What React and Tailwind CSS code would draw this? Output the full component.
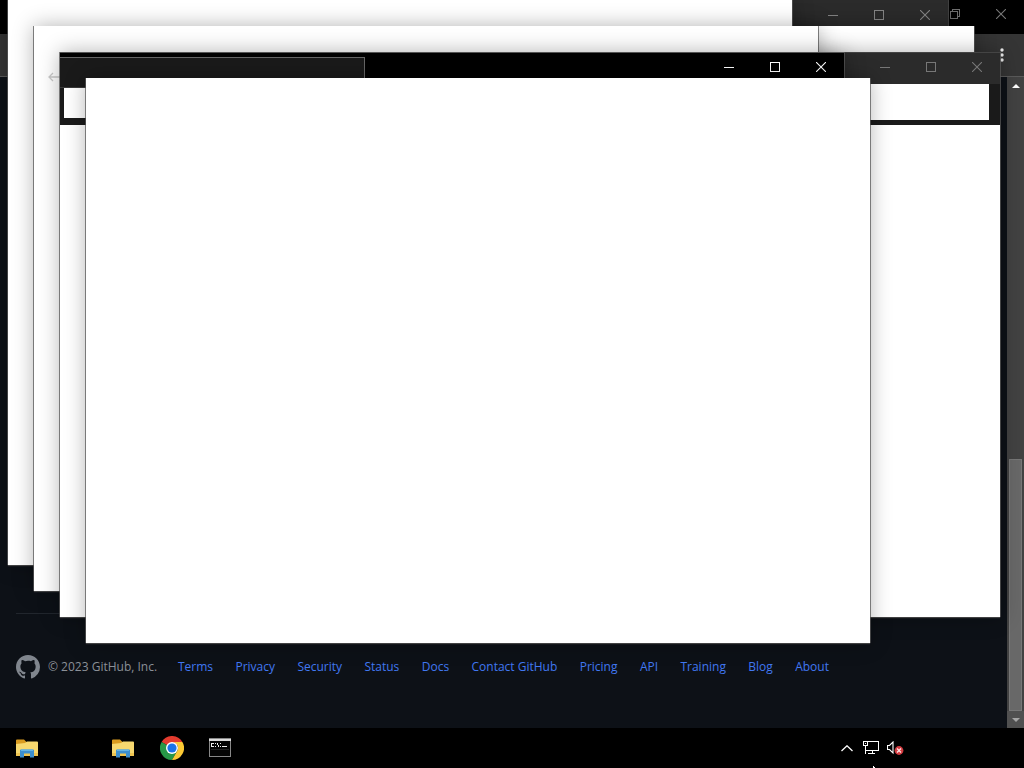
import React from "react";

const footerLinks = [
  "Terms", "Privacy", "Security", "Status", "Docs", "Contact GitHub",
  "Pricing", "API", "Training", "Blog", "About",
];

function MinimizeIcon() {
  return (
    <svg width="10" height="10" viewBox="0 0 10 10" fill="none" stroke="currentColor" shapeRendering="crispEdges">
      <path d="M0 5.5H10" />
    </svg>
  );
}

function MaximizeIcon() {
  return (
    <svg width="10" height="10" viewBox="0 0 10 10" fill="none" stroke="currentColor" shapeRendering="crispEdges">
      <path d="M.5 .5H9.5V9.5H.5Z" />
    </svg>
  );
}

function RestoreIcon() {
  return (
    <svg width="10" height="10" viewBox="0 0 10 10" fill="none" stroke="currentColor" shapeRendering="crispEdges">
      <path d="M.5 2.5H7.5V9.5H.5ZM2.5 2.5V.5H9.5V7.5H7.5" />
    </svg>
  );
}

function CloseIcon() {
  return (
    <svg width="10" height="10" viewBox="0 0 10 10" fill="none" stroke="currentColor" strokeWidth="1.1">
      <path d="M0 0L10 10M10 0L0 10" />
    </svg>
  );
}

function WindowControls({ restored = true }) {
  const button = "flex h-full w-[46px] items-center justify-center";
  return (
    <div className="ml-auto flex h-full">
      <button aria-label="Minimize" className={button}><MinimizeIcon /></button>
      <button aria-label={restored ? "Maximize" : "Restore"} className={button}>
        {restored ? <MaximizeIcon /> : <RestoreIcon />}
      </button>
      <button aria-label="Close" className={button}><CloseIcon /></button>
    </div>
  );
}

function Window({ className, children }) {
  return (
    <section className={`absolute flex h-[565px] w-[784px] flex-col shadow-[0_1px_1px_rgba(80,80,80,0.8),-1px_0_0_rgba(90,90,90,0.7),1px_0_0_rgba(90,90,90,0.7),0_0_20px_rgba(0,0,0,0.3)] ${className}`}>
      {children}
    </section>
  );
}

function FolderIcon() {
  return (
    <svg width="22" height="19" viewBox="0 0 22 19">
      <path d="M0 1.5Q0 .5 1 .5H8L10.5 3H21V5H0Z" fill="#d99b20" />
      <path d="M0 5L9 4L11 2.5H21Q22 2.5 22 3.5V17H0Z" fill="#f7d86f" />
      <path d="M0 14H22V17H0Z" fill="#efc451" />
      <path d="M4 18.5V11.5Q4 10.5 5 10.5H17Q18 10.5 18 11.5V18.5H14V14.5H8V18.5Z" fill="#3d8fcf" />
      <path d="M5 10.5H17V12H5Z" fill="#64b4e6" />
    </svg>
  );
}

function ChromeIcon() {
  return (
    <svg width="24" height="24" viewBox="0 0 48 48">
      <path d="M24 24L3.2 12A24 24 0 0 1 44.8 12Z" fill="#e33b2e" />
      <path d="M3.2 12A24 24 0 0 0 24 48L34.4 30L24 24Z" fill="#279847" />
      <path d="M44.8 12A24 24 0 0 1 24 48L34.4 30A12 12 0 0 0 24 12Z" fill="#fcc934" />
      <circle cx="24" cy="24" r="12" fill="#fff" />
      <circle cx="24" cy="24" r="9.2" fill="#1a73e8" />
    </svg>
  );
}

function TerminalIcon() {
  return (
    <svg width="22" height="20" viewBox="0 0 22 20" shapeRendering="crispEdges">
      <rect x=".5" y=".5" width="21" height="18" fill="#050505" stroke="#888" />
      <path d="M0 1.5H22" stroke="#dcdcdc" strokeWidth="2" />
      <path d="M4.5 5.5H2.5V8.5H4.5M6.5 5V6M6.5 8V9M8 5L10 9M11.5 5V6M11.5 8V9M13 8.5H18" fill="none" stroke="#eee" />
      <path d="M2 11H20" stroke="#222" />
    </svg>
  );
}

function NetworkIcon() {
  return (
    <svg width="16" height="14" viewBox="0 0 16 14" fill="none" stroke="#fff" shapeRendering="crispEdges">
      <path d="M5 .5H15.5V9.5H3M.5 .5H4.5V4.5H.5ZM2.5 4V12.5M9.5 10V12.5M5 12.5H12M2 2.5H3" />
    </svg>
  );
}

function MutedIcon() {
  return (
    <svg width="17" height="14" viewBox="0 0 17 14" fill="none">
      <path d="M.5 4.5H2.5L6 1V12L2.5 8.5H.5Z" stroke="#fff" strokeWidth="1.1" />
      <circle cx="12" cy="9.5" r="4.4" fill="#d33b40" />
      <path d="M10 7.5L14 11.5M14 7.5L10 11.5" stroke="#ffe5e5" strokeWidth="1.3" />
    </svg>
  );
}

function Scrollbar() {
  return (
    <div className="flex w-[17px] shrink-0 flex-col bg-[#424242]">
      <button aria-label="Scroll up" className="flex h-[18px] items-center justify-center">
        <svg width="8" height="4" viewBox="0 0 8 4"><path d="M0 4L4 0L8 4Z" fill="#fff" /></svg>
      </button>
      <div className="flex flex-1 flex-col justify-end px-0.5">
        <div className="h-[252px] border border-[#777] bg-[#686868]" />
      </div>
      <button aria-label="Scroll down" className="flex h-[17px] items-center justify-center bg-[#505050]">
        <svg width="8" height="4" viewBox="0 0 8 4"><path d="M0 0L4 4L8 0Z" fill="#a5a5a5" /></svg>
      </button>
    </div>
  );
}

function Browser() {
  return (
    <div className="flex flex-1 flex-col bg-[#0d1117]">
      <header className="flex h-[34px] bg-black pb-[6px] text-[#777]">
        <WindowControls restored={false} />
      </header>
      <div className="flex h-[43px] items-center justify-end border-b border-[#5a5a5a] bg-[#353535] pr-5">
        <button aria-label="Browser menu">
          <svg width="4" height="14" viewBox="0 0 4 14" fill="#eee">
            <circle cx="2" cy="2" r="1.7" /><circle cx="2" cy="7" r="1.7" /><circle cx="2" cy="12" r="1.7" />
          </svg>
        </button>
      </div>
      <div className="flex flex-1">
        <main className="flex flex-1 flex-col justify-end px-4 pb-[49px]">
          <footer className="flex items-center border-t border-[#21262d] pt-[41px]">
            <a href="#home" aria-label="GitHub" className="text-[#80868e]">
              <svg width="24" height="24" viewBox="0 0 16 16" fill="currentColor">
                <path d="M8 0C3.58 0 0 3.58 0 8c0 3.54 2.29 6.53 5.47 7.59.4.07.55-.17.55-.38 0-.19-.01-.82-.01-1.49-2.01.37-2.53-.49-2.69-.94-.09-.23-.48-.94-.82-1.13-.28-.15-.68-.52-.01-.53.63-.01 1.08.58 1.23.82.72 1.21 1.87.87 2.33.66.07-.52.28-.87.51-1.07-1.78-.2-3.64-.89-3.64-3.95 0-.87.31-1.59.82-2.15-.08-.2-.36-1.02.08-2.12 0 0 .67-.21 2.2.82A7.64 7.64 0 0 1 8 3.87c.68 0 1.36.09 2 .27 1.53-1.04 2.2-.82 2.2-.82.44 1.1.16 1.92.08 2.12.51.56.82 1.27.82 2.15 0 3.07-1.87 3.75-3.65 3.95.29.25.54.73.54 1.48 0 1.07-.01 1.93-.01 2.2 0 .21.15.46.55.38A8.01 8.01 0 0 0 16 8c0-4.42-3.58-8-8-8Z" />
              </svg>
            </a>
            <span className="ml-2 w-[130px] whitespace-nowrap text-[#8b9097]">© 2023 GitHub, Inc.</span>
            <nav className="flex max-w-[651px] flex-1 justify-between whitespace-nowrap text-[#4178f2]">
              {footerLinks.map((name) => (
                <a key={name} href={`#${name.toLowerCase().replace(" ", "-")}`}>{name}</a>
              ))}
            </nav>
          </footer>
        </main>
        <Scrollbar />
      </div>
    </div>
  );
}

function Taskbar() {
  const slot = "flex w-12 items-center justify-center";
  const tray = "flex w-6 items-center justify-center";
  return (
    <div className="relative flex h-10 bg-black pl-[3px] pr-[117px]">
      <button aria-label="File Explorer" className={slot}><FolderIcon /></button>
      <div className={slot} />
      <button aria-label="Documents" className={slot}><FolderIcon /></button>
      <button aria-label="Chrome" className={`${slot} ml-px`}><ChromeIcon /></button>
      <button aria-label="Command Prompt" className={slot}><TerminalIcon /></button>
      <div className="ml-auto flex">
        <button aria-label="Hidden icons" className={tray}>
          <svg width="12" height="7" viewBox="0 0 12 7" fill="none" stroke="#fff" strokeWidth="1.3"><path d="M.5 6L6 .8L11.5 6" /></svg>
        </button>
        <button aria-label="Network" className={tray}><NetworkIcon /></button>
        <button aria-label="Volume" className={tray}><MutedIcon /></button>
      </div>
      <svg className="absolute bottom-0 right-[149px]" width="2" height="2" viewBox="0 0 2 2" fill="#fff"><path d="M0 0H1V1H2V2H0Z" /></svg>
    </div>
  );
}

export default function App() {
  return (
    <div className="relative flex min-h-screen flex-col overflow-hidden bg-black font-['Open_Sans','Noto_Sans',sans-serif] text-xs">
      <Browser />

      <Window className="left-[164px] top-0 bg-white">
        <div className="flex h-[30px] bg-[#2b2b2b] text-[#858585]"><WindowControls /></div>
      </Window>
      <Window className="left-[190px] top-[26px] bg-white" />
      <Window className="left-[216px] top-[52px] bg-white">
        <div className="flex h-8 border-t border-[#444] bg-[#2b2b2b] pb-[3px] text-[#777]"><WindowControls /></div>
        <div className="flex h-[41px] bg-[#1a1a1a] pb-[5px] pl-1 pr-[11px]">
          <input aria-label="Address" className="h-full flex-1 bg-white" />
        </div>
      </Window>

      <Window className="left-2 top-0 bg-white" />
      <Window className="left-[34px] top-[26px] bg-white">
        <button aria-label="Back" className="ml-[14px] mt-[46px] self-start">
          <svg width="12" height="10" viewBox="0 0 12 10" fill="none" stroke="#c9c9c9" strokeWidth="1.3"><path d="M12 5H1M5 1L1 5L5 9" /></svg>
        </button>
      </Window>
      <Window className="left-[60px] top-[52px] bg-white">
        <div className="flex h-[35px] border-t border-[#555] bg-black text-white">
          <div className="mt-1 w-[305px] border-r border-t border-[#666] bg-[#1a1a1a]" />
          <div className="ml-auto h-7"><WindowControls /></div>
        </div>
        <div className="flex h-[38px] border-t border-[#3a3a3a] bg-[#1a1a1a] pb-[7px] pl-1 pr-3">
          <input aria-label="Location" className="h-full flex-1 bg-white" />
        </div>
      </Window>
      <Window className="left-[86px] top-[78px] bg-white" />

      <Taskbar />
    </div>
  );
}
